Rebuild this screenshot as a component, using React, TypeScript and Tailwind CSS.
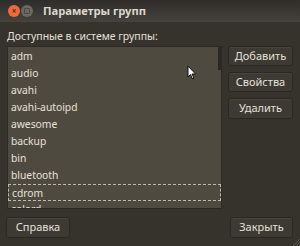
import React from "react"

const groups = ["adm", "audio", "avahi", "avahi-autoipd", "awesome", "backup", "bin", "bluetooth", "cdrom", "colord"]

function Btn({ label, className = "" }: { label: string; className?: string }) {
  return (
    <div
      className={`flex items-center justify-center rounded-[3px] border border-[#2a2824] bg-[#3d3a34] text-[11px] text-[#e4e0d8] shadow-[inset_0_1px_0_rgba(255,255,255,0.06)] ${className}`}
    >
      {label}
    </div>
  )
}

export default function App() {
  return (
    <div
      className="relative flex h-[246px] w-[300px] flex-col overflow-hidden bg-[#36332d]"
      style={{ fontFamily: '"Noto Sans", "DejaVu Sans", sans-serif' }}
    >
      {/* title bar */}
      <div className="flex h-[22px] items-center bg-gradient-to-b from-[#2f2d29] to-[#46433e] pl-[8px]">
        <div className="flex h-[12px] w-[12px] items-center justify-center rounded-full bg-[#ef6a3c] text-[8px] font-bold leading-none text-[#5a2a18]">
          ×
        </div>
        <div className="ml-[1px] flex h-[12px] w-[12px] items-center justify-center rounded-full bg-[#6b6861]">
          <div className="h-[6px] w-[6px] rounded-[1px] border border-[#4a4843]" />
        </div>
        <div className="ml-[10px] text-[11.2px] font-bold text-[#dcd8cf]">Параметры групп</div>
      </div>

      {/* body */}
      <div className="flex flex-1 flex-col px-[7px] pt-[4px]">
        <div className="h-[20px] text-[10.5px] leading-[20px] text-[#e4e0d8]">Доступные в системе группы:</div>
        <div className="flex gap-[6px]">
          <div className="relative h-[163px] w-[216px] overflow-hidden border border-[#2d2a25] bg-[#4f4a40] pt-[1px]">
            {groups.map((g) => (
              <div
                key={g}
                className={`h-[17px] pl-[3px] text-[10.3px] leading-[16px] text-[#e6e2da] ${
                  g === "cdrom" ? "border border-dashed border-[#bfbab0] pl-[2px] leading-[15px]" : ""
                }`}
              >
                {g}
              </div>
            ))}
            <div className="absolute right-0 top-0 h-[23px] w-[3px] bg-[#2a2824]" />
            {/* mouse cursor */}
            <svg className="absolute left-[179px] top-[18px]" width="10" height="15" viewBox="0 0 10 15">
              <path d="M1 1 L1 12 L3.5 9.5 L5.5 14 L7 13.3 L5 9 L8.5 9 Z" fill="#fff" stroke="#111" strokeWidth="1" />
            </svg>
          </div>
          <div className="flex flex-col gap-[6px] pt-[0px]">
            <Btn label="Добавить" className="h-[20px] w-[65px]" />
            <Btn label="Свойства" className="h-[20px] w-[65px]" />
            <Btn label="Удалить" className="h-[21px] w-[65px]" />
          </div>
        </div>
        <div className="mt-[8px] flex justify-between pr-[0px]">
          <Btn label="Справка" className="-ml-[1px] h-[21px] w-[64px]" />
          <Btn label="Закрыть" className="h-[21px] w-[63px]" />
        </div>
      </div>

      {/* resize grip */}
      <svg className="absolute bottom-0 right-0" width="8" height="8" viewBox="0 0 8 8">
        <path d="M8 1 L1 8 M8 4 L4 8 M8 7 L7 8" stroke="#5a5750" strokeWidth="1" />
      </svg>
    </div>
  )
}
